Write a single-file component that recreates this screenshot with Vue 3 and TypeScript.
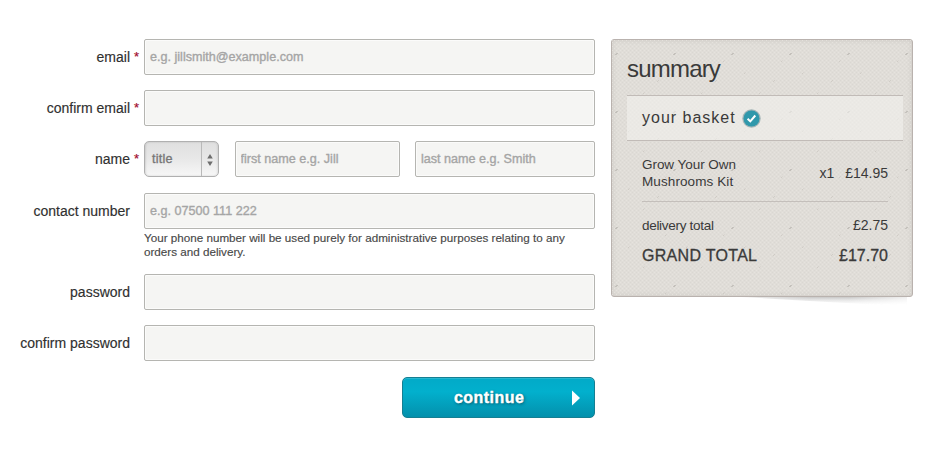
<script setup lang="ts">
import { ref } from 'vue'

interface Field {
  id: string
  label: string
  type: string
  placeholder?: string
  required?: boolean
  help?: string
}

const emailFields: Field[] = [
  { id: 'email', label: 'email', type: 'email', placeholder: 'e.g. jillsmith@example.com', required: true },
  { id: 'confirm-email', label: 'confirm email', type: 'email', required: true },
]

const accountFields: Field[] = [
  {
    id: 'phone',
    label: 'contact number',
    type: 'tel',
    placeholder: 'e.g. 07500 111 222',
    help: 'Your phone number will be used purely for administrative purposes relating to any orders and delivery.',
  },
  { id: 'password', label: 'password', type: 'password' },
  { id: 'confirm-password', label: 'confirm password', type: 'password' },
]

const values = ref<Record<string, string>>({})
</script>

<template>
  <main class="checkout">
    <form class="form" @submit.prevent>
      <div v-for="f in emailFields" :key="f.id" class="row">
        <label class="label" :for="f.id">{{ f.label }}<span v-if="f.required" class="star">*</span></label>
        <input :id="f.id" v-model="values[f.id]" class="input" :type="f.type" :placeholder="f.placeholder" />
      </div>

      <div class="row name-row">
        <label class="label" for="first">name<span class="star">*</span></label>
        <div class="names">
          <button type="button" class="select">
            <span class="select-text">title</span>
            <span class="select-arrows">
              <svg width="6" height="12" viewBox="0 0 6 12"><path d="M3 0L5.8 4.600H.2zM3 12L.2 7.400h5.600z" fill="#6d6d6d" /></svg>
            </span>
          </button>
          <input id="first" v-model="values.first" class="input" type="text" placeholder="first name e.g. Jill" />
          <input id="last" v-model="values.last" class="input" type="text" placeholder="last name e.g. Smith" />
        </div>
      </div>

      <div v-for="f in accountFields" :key="f.id" class="row">
        <label class="label" :for="f.id">{{ f.label }}</label>
        <div class="control">
          <input :id="f.id" v-model="values[f.id]" class="input" :type="f.type" :placeholder="f.placeholder" />
          <p v-if="f.help" class="help">{{ f.help }}</p>
        </div>
      </div>

      <button type="submit" class="continue">
        <span class="continue-text">continue</span>
        <svg class="continue-arrow" width="8" height="16" viewBox="0 0 8 16"><path d="M0 0.500L8 8L0 15.500z" fill="#fff" /></svg>
      </button>
    </form>

    <aside class="summary">
      <svg class="curl" width="200" height="14" viewBox="0 0 200 14">
        <defs>
          <linearGradient id="curlY" x1="0" y1="0" x2="0" y2="1">
            <stop offset="0" stop-color="#8d8a88" stop-opacity=".7" />
            <stop offset=".4" stop-color="#aaa" stop-opacity=".35" />
            <stop offset=".9" stop-color="#ccc" stop-opacity="0" />
          </linearGradient>
          <linearGradient id="curlX" x1="0" y1="0" x2="1" y2="0">
            <stop offset="0" stop-color="#fff" stop-opacity="0" />
            <stop offset=".5" stop-color="#fff" />
            <stop offset=".7" stop-color="#fff" />
            <stop offset="1" stop-color="#fff" stop-opacity=".25" />
          </linearGradient>
          <mask id="curlMask"><rect width="200" height="14" fill="url(#curlX)" /></mask>
        </defs>
        <path d="M0 0H197V11Q110 7 0 0z" fill="url(#curlY)" mask="url(#curlMask)" />
      </svg>
      <div class="card">
        <svg class="paper" width="100%" height="100%">
          <defs>
            <pattern id="weave" width="4" height="4" patternUnits="userSpaceOnUse">
              <path d="M0 1l1-1M2 3l1-1" stroke="#d8d5d0" stroke-width=".8" />
              <path d="M2 1l1-1M0 3l1-1" stroke="#e7e4e0" stroke-width=".8" />
            </pattern>
            <pattern id="flecks" x="3" y="12" width="58" height="58" patternUnits="userSpaceOnUse">
              <path d="M0.500 3L2.500 1" stroke="#a39f9a" stroke-width=".9" />
              <path d="M42 30l2-2M28 42l1.500-1.500M13 22l1.500-1.500M50 10l1.500-1.500" stroke="#c8c4bf" stroke-width=".7" />
            </pattern>
          </defs>
          <rect width="100%" height="100%" fill="url(#weave)" />
          <rect width="100%" height="100%" fill="url(#flecks)" />
        </svg>
        <h2 class="title">summary</h2>
        <div class="basket">
          <span class="basket-text">your basket</span>
          <svg width="19" height="19" viewBox="0 0 19 19">
            <circle cx="9.500" cy="9.500" r="9.200" fill="#a3b4b6" />
            <circle cx="9.500" cy="9.500" r="8" fill="#3098ab" />
            <path d="M5.600 9.800L8.300 12.400L13.300 6.500" fill="none" stroke="#fff" stroke-width="2" />
          </svg>
        </div>
        <div class="lines">
          <div class="item">
            <span class="item-name"><span class="grow">Grow Your Own</span><br />Mushrooms Kit</span>
            <span class="qty">x1</span>
            <span class="price">£14.95</span>
          </div>
          <div class="line">
            <span class="delivery">delivery total</span>
            <span class="price">£2.75</span>
          </div>
          <div class="line grand">
            <span class="grand-label">GRAND TOTAL</span>
            <span>£17.70</span>
          </div>
        </div>
      </div>
    </aside>
  </main>
</template>

<style>
body {
  background: #fff;
}
</style>

<style scoped>
.checkout,
.checkout * {
  box-sizing: border-box;
}
.checkout {
  display: flex;
  align-items: flex-start;
  width: 941px;
  height: 453px;
  padding-top: 39px;
  font-family: "Liberation Sans", Arial, sans-serif;
  font-size: 14px;
  color: #3a3a3a;
}
.form {
  display: flex;
  flex-direction: column;
  gap: 15px;
  width: 595px;
}
.row {
  display: grid;
  grid-template-columns: 144px 1fr;
  align-items: start;
}
.name-row {
  margin-bottom: 1px;
}
.label {
  position: relative;
  padding-right: 14px;
  text-align: right;
  line-height: 37px;
  height: 36px;
  color: #303030;
  -webkit-text-stroke: 0.15px #303030;
}
.star {
  position: absolute;
  right: 5px;
  top: -1px;
  font-size: 13px;
  color: #a3102f;
  -webkit-text-stroke: 0.2px #a3102f;
}
.input {
  display: block;
  width: 100%;
  min-width: 0;
  height: 36px;
  margin: 0;
  padding: 0 5px;
  border: 1px solid #b5b5b1;
  border-radius: 2px;
  background: #f5f5f3;
  box-shadow: inset 0 0 0 1px #fbfbfa;
  font-family: inherit;
  font-size: 12.6px;
  color: #333;
  outline: none;
}
.input::placeholder {
  color: #a5a5a5;
  opacity: 1;
  -webkit-text-stroke: 0.35px #a5a5a5;
}
.names {
  display: grid;
  grid-template-columns: 75px 165px 180px;
  justify-content: space-between;
}
.select {
  display: flex;
  height: 36px;
  padding: 0;
  border: 1px solid #b0b0b0;
  border-radius: 5px;
  background: linear-gradient(#dfdfdf, #e8e8e8 50%, #f7f7f7);
  box-shadow: inset 1px 0 2px rgba(0, 0, 0, 0.1), inset -1px 0 2px rgba(0, 0, 0, 0.08);
  font-family: inherit;
  font-size: 12.6px;
  color: #777;
}
.select-text {
  flex: 1;
  padding-left: 7px;
  text-align: left;
  line-height: 35px;
  letter-spacing: 0.2px;
  -webkit-text-stroke: 0.35px #777;
}
.select-arrows {
  display: flex;
  align-items: center;
  justify-content: center;
  width: 17px;
  height: 34px;
  padding-top: 1px;
  border-left: 1px solid #b9b9b9;
}
.help {
  margin: 2px 0 1px;
  font-size: 11.66px;
  line-height: 13.5px;
  color: #484848;
  -webkit-text-stroke: 0.15px #484848;
}
.continue {
  display: flex;
  align-items: center;
  align-self: flex-end;
  width: 193px;
  height: 41px;
  margin: 1px 0 0;
  padding: 0 14px 0 51px;
  border: 1px solid #157f92;
  border-radius: 5px;
  background: linear-gradient(#02aac8, #02b0cd 35%, #0390ac);
  box-shadow: inset 0 1px 0 rgba(255, 255, 255, 0.15);
  color: #fff;
  font-family: inherit;
}
.continue-text {
  flex: 1;
  text-align: left;
  font-size: 16px;
  font-weight: bold;
  letter-spacing: 0.45px;
  -webkit-text-stroke: 0.4px #fff;
  text-shadow: 1px 1px 3px rgba(0, 50, 65, 0.75);
}
.summary {
  position: relative;
  width: 302px;
  margin-left: 16px;
}
.curl {
  position: absolute;
  right: 3px;
  bottom: -12px;
}
.card {
  position: relative;
  height: 258px;
  padding: 0 9px 0 15px;
  border: 1px solid #b9b2ae;
  border-radius: 3px;
  background: #e0ddd8;
  box-shadow: inset 0 0 5px rgba(120, 110, 105, 0.2);
}
.paper {
  position: absolute;
  inset: 0;
}
.title {
  position: relative;
  height: 55px;
  margin: 0;
  font-size: 24px;
  font-weight: normal;
  line-height: 57px;
  letter-spacing: -0.8px;
}
.basket {
  position: relative;
  display: flex;
  align-items: center;
  gap: 6px;
  height: 46px;
  padding-left: 15px;
  border-top: 1px solid #c1bbb7;
  border-bottom: 1px solid #c1bbb7;
  background: rgba(242, 242, 239, 0.6);
}
.basket-text {
  font-size: 16px;
  letter-spacing: 1px;
}
.lines {
  position: relative;
  padding: 0 15px;
}
.item {
  display: flex;
  align-items: center;
  height: 61px;
  padding-top: 4px;
  border-bottom: 1px solid #c4bfbb;
}
.item-name {
  flex: 1;
  font-size: 13.5px;
  line-height: 17px;
  letter-spacing: 0.1px;
}
.grow {
  letter-spacing: -0.05px;
}
.qty {
  margin-right: 11px;
}
.line {
  display: flex;
  justify-content: space-between;
  align-items: center;
  padding-top: 15px;
  line-height: 17px;
}
.delivery {
  font-size: 13.5px;
  letter-spacing: -0.3px;
}
.grand {
  padding-top: 13px;
  font-size: 16px;
  -webkit-text-stroke: 0.3px #3a3a3a;
}
.grand-label {
  letter-spacing: 0.3px;
}
</style>
